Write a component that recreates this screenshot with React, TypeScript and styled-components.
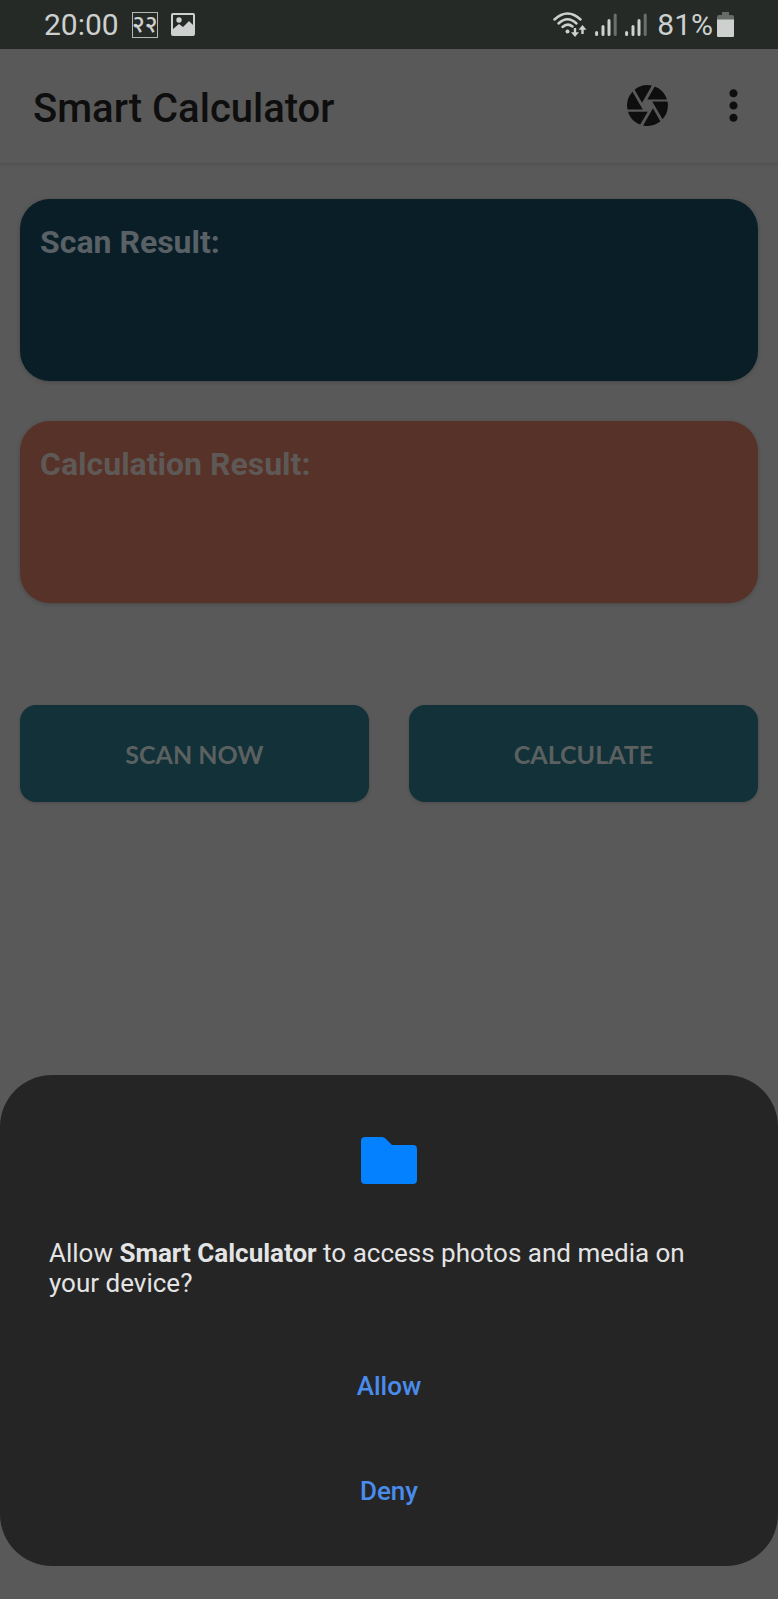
import React from "react";
import styled, { createGlobalStyle } from "styled-components";
import { MdCamera, MdMoreVert } from "react-icons/md";

const GlobalStyle = createGlobalStyle`
  * { box-sizing: border-box; }
  html, body { margin: 0; background: #595959; }
  body { font-family: Roboto, "Liberation Sans", sans-serif; }
  button { font: inherit; border: 0; padding: 0; cursor: pointer; }
`;

const Screen = styled.div`
  min-height: 100vh;
  background: #595959;
`;

const StatusBar = styled.div`
  display: flex;
  align-items: center;
  justify-content: space-between;
  height: 49px;
  padding: 0 44px;
  background: #252a27;
  color: #cdd0ce;
  font-size: 30px;
  line-height: 48px;
`;

const StatusGroup = styled.div<{ $gap: number }>`
  display: flex;
  align-items: center;
  gap: ${(p) => p.$gap}px;
  svg { display: block; }
`;

const DateBadge = styled.span`
  display: flex;
  align-items: center;
  justify-content: center;
  width: 26px;
  height: 26px;
  padding-bottom: 4px;
  border: 1px solid #b4b7b5;
  font: 500 24px/20px "Noto Sans", "Noto Sans Devanagari", sans-serif;
`;

const AppBar = styled.header`
  display: flex;
  align-items: center;
  justify-content: space-between;
  height: 114px;
  padding: 0 20px 2px 33px;
  box-shadow: 0 1px 3px rgba(0, 0, 0, 0.14);
  color: #0e0e0e;
`;

const Title = styled.h1`
  margin: 0;
  padding-top: 8px;
  font-size: 40px;
  line-height: 48px;
  font-weight: 500;
`;

const Actions = styled.div`
  display: flex;
  gap: 37px;
`;

const IconButton = styled.button`
  display: flex;
  color: inherit;
  background: none;
`;

const Content = styled.main`
  display: flex;
  flex-direction: column;
  gap: 40px;
  padding: 36px 20px;
`;

const ResultCard = styled.section<{ $tone: string; $ink: string }>`
  min-height: 182px;
  padding: 23px 20px;
  border-radius: 30px;
  background: ${(p) => p.$tone};
  color: ${(p) => p.$ink};
  box-shadow: 0 1px 4px rgba(0, 0, 0, 0.2);
`;

const CardTitle = styled.h2`
  margin: 0;
  font-size: 32px;
  line-height: 40px;
  font-weight: 700;
`;

const ButtonRow = styled.div`
  display: grid;
  grid-template-columns: 1fr 1fr;
  gap: 40px;
  padding-top: 62px;
`;

const ActionButton = styled.button`
  && {
    height: 97px;
    border-radius: 16px;
    background: #123138;
    color: #5b6061;
    box-shadow: 0 1px 3px rgba(0, 0, 0, 0.18);
    font-family: Lato, "Open Sans", sans-serif;
    font-size: 25px;
    font-weight: 700;
  }
`;

const SheetLayer = styled.div`
  position: fixed;
  inset: 0;
  display: flex;
  align-items: flex-end;
  padding-bottom: 33px;
`;

const Sheet = styled.div`
  display: flex;
  flex-direction: column;
  align-items: center;
  width: 100%;
  padding: 62px 49px 23px;
  border-radius: 52px;
  background: #252525;
`;

const Message = styled.p`
  align-self: stretch;
  margin: 0 0 35px;
  padding-top: 54px;
  color: #e4e4e4;
  font-size: 26px;
  line-height: 30px;
`;

const SheetButton = styled.button`
  && {
    width: 100%;
    height: 105px;
    background: none;
    color: #4a8cec;
    font-size: 26px;
    line-height: 32px;
    font-weight: 500;
  }
`;

const PictureIcon = () => (
  <svg width="24" height="23" viewBox="0 0 24 23" aria-hidden="true">
    <path
      fill="currentColor"
      fillRule="evenodd"
      d="M2 0h20a2 2 0 0 1 2 2v19a2 2 0 0 1-2 2H2a2 2 0 0 1-2-2V2a2 2 0 0 1 2-2zM2 2v14l6-5 4 3 6-6 4 4V2z"
    />
    <circle cx="8" cy="7" r="2.7" fill="currentColor" />
  </svg>
);

const WifiIcon = () => (
  <svg width="34" height="26" viewBox="0 0 34 26" fill="none" stroke="currentColor" aria-hidden="true">
    <g strokeWidth="2.5" strokeLinecap="round">
      <path d="M1.500 7.500Q14.500-4.500 27.500 7.500" />
      <path d="M5.500 11.500Q14.500 3 23.500 11.500" />
      <path d="M9.500 15Q14.500 10.500 19.500 14.500" />
    </g>
    <circle cx="14.5" cy="19.5" r="2" fill="currentColor" stroke="none" />
    <path strokeWidth="2.4" d="M22 16v7M29.500 22v-7" />
    <path fill="currentColor" stroke="none" d="M18 20.200h8L22 25zM25.500 17.800h8L29.500 13z" />
  </svg>
);

const SignalIcon = () => (
  <svg width="22" height="24" viewBox="0 0 22 24" fill="none" stroke="currentColor" strokeWidth="3" strokeLinecap="round" aria-hidden="true">
    <path d="M1.600 19.500v2M8 13.500v8M14 7.500v14" />
    <path d="M20.200 2v19.500" opacity=".42" />
  </svg>
);

const BatteryIcon = () => (
  <svg width="17" height="25" viewBox="0 0 17 25" fill="currentColor" aria-hidden="true">
    <path opacity=".4" d="M5 0h7v3h3a2 2 0 0 1 2 2v3H0V5a2 2 0 0 1 2-2h3z" />
    <path d="M0 7.500h17V24a1 1 0 0 1-1 1H1a1 1 0 0 1-1-1z" />
  </svg>
);

const FolderIcon = () => (
  <svg width="56" height="47" viewBox="0 0 56 47" aria-hidden="true">
    <path
      fill="#0381fe"
      d="M4 0H21Q23 0 24.500 1.500L31 8H52a4 4 0 0 1 4 4V43a4 4 0 0 1-4 4H4a4 4 0 0 1-4-4V4a4 4 0 0 1 4-4z"
    />
  </svg>
);

export default function App() {
  return (
    <>
      <GlobalStyle />
      <Screen>
        <StatusBar>
          <StatusGroup $gap={13}>
            <span>20:00</span>
            <DateBadge>२२</DateBadge>
            <PictureIcon />
          </StatusGroup>
          <StatusGroup $gap={10}>
            <StatusGroup $gap={8}>
              <WifiIcon />
              <SignalIcon />
              <SignalIcon />
            </StatusGroup>
            <StatusGroup $gap={4}>
              <span>81%</span>
              <BatteryIcon />
            </StatusGroup>
          </StatusGroup>
        </StatusBar>
        <AppBar>
          <Title>Smart Calculator</Title>
          <Actions>
            <IconButton aria-label="Open camera">
              <MdCamera size={49} />
            </IconButton>
            <IconButton aria-label="More options">
              <MdMoreVert size={49} />
            </IconButton>
          </Actions>
        </AppBar>
        <Content>
          <ResultCard $tone="#091e27" $ink="#596166">
            <CardTitle>Scan Result:</CardTitle>
          </ResultCard>
          <ResultCard $tone="#573228" $ink="#5e5956">
            <CardTitle>Calculation Result:</CardTitle>
          </ResultCard>
          <ButtonRow>
            <ActionButton>SCAN NOW</ActionButton>
            <ActionButton>CALCULATE</ActionButton>
          </ButtonRow>
        </Content>
      </Screen>
      <SheetLayer>
        <Sheet role="dialog" aria-modal="true" aria-labelledby="permission-message">
          <FolderIcon />
          <Message id="permission-message">
            Allow <strong>Smart Calculator</strong> to access photos and media on your device?
          </Message>
          <SheetButton>Allow</SheetButton>
          <SheetButton>Deny</SheetButton>
        </Sheet>
      </SheetLayer>
    </>
  );
}
